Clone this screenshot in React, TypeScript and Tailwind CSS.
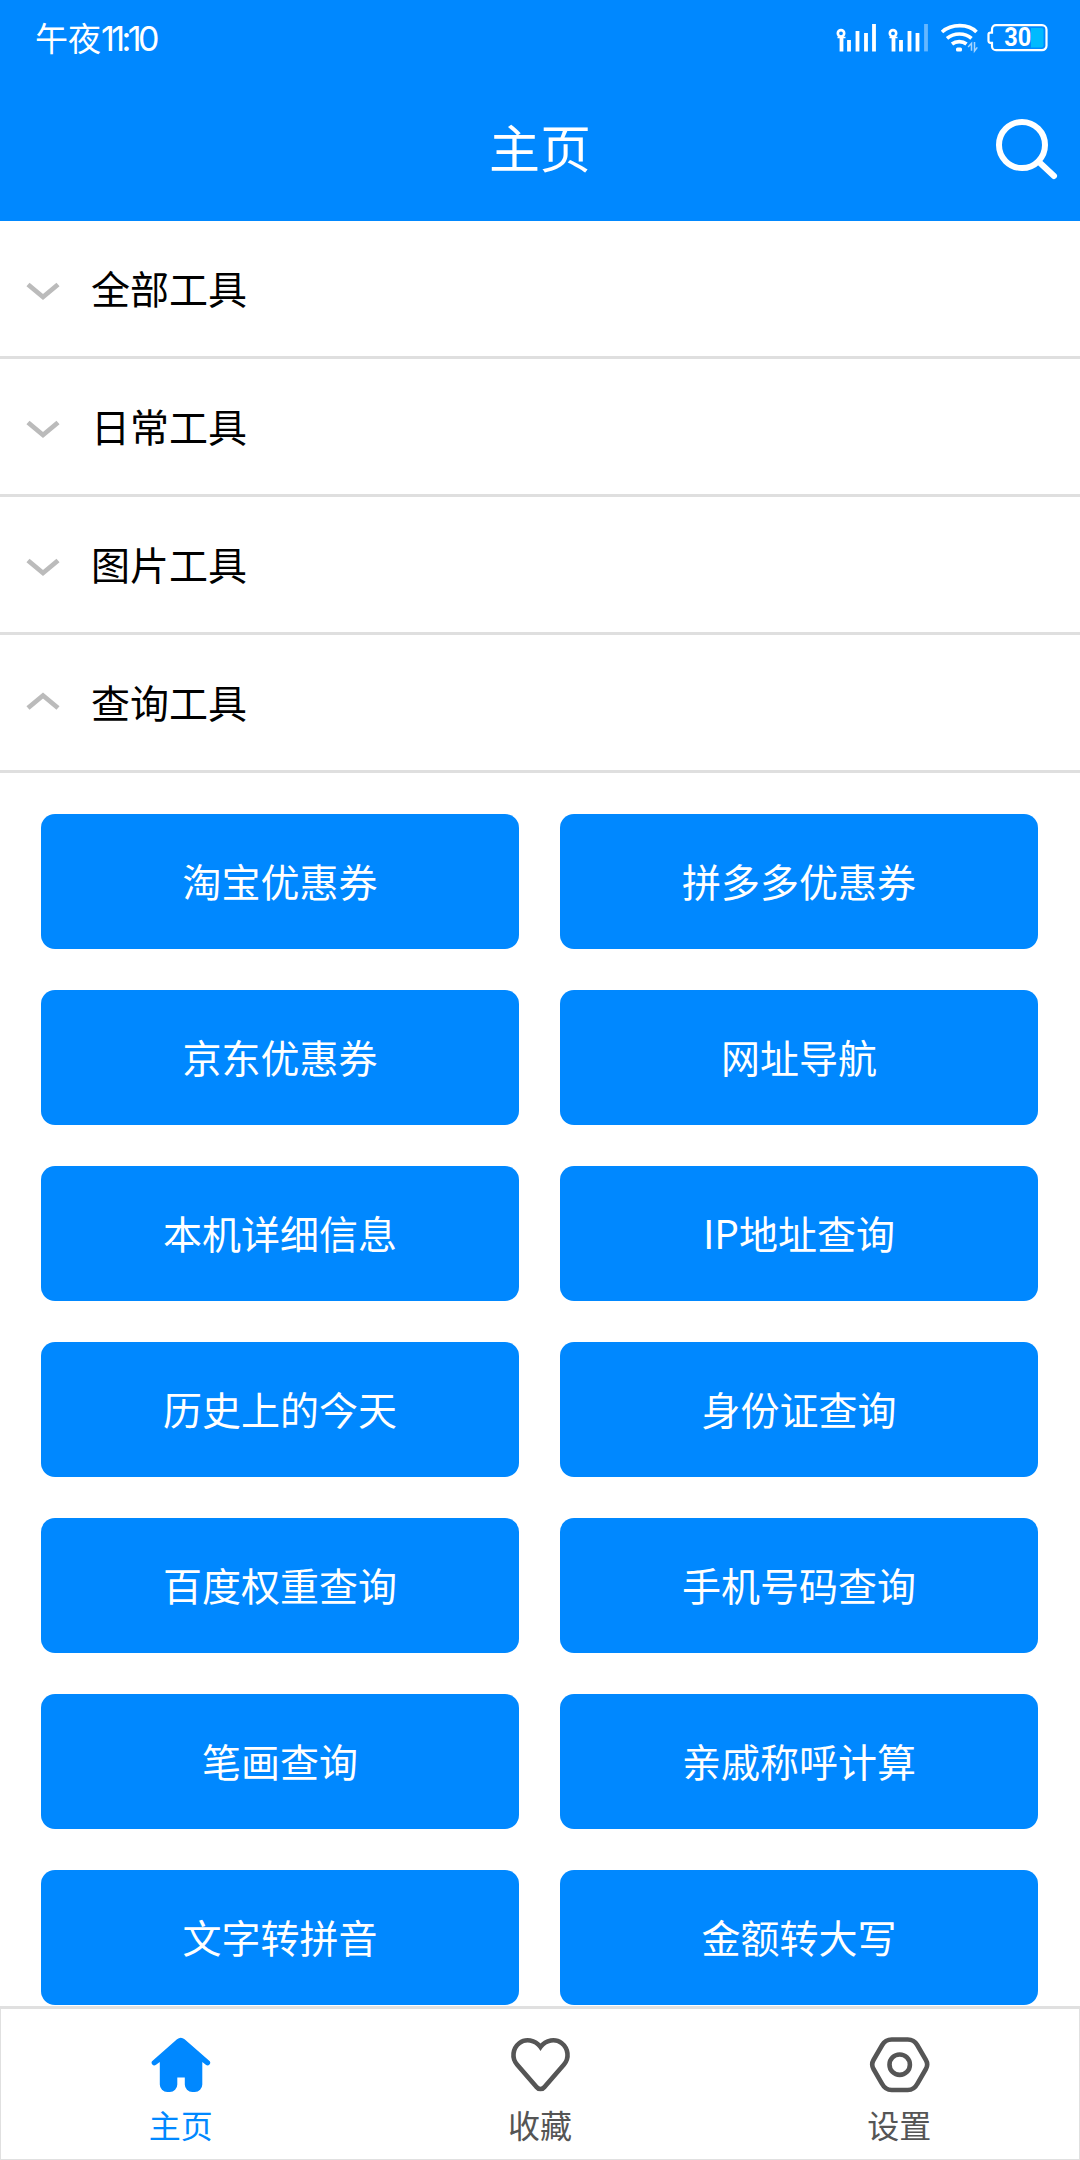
import { useState } from 'react';

interface Category {
    name: string;
    tools: string[];
}

const categories: Category[] = [
    { name: '全部工具', tools: [] },
    { name: '日常工具', tools: [] },
    { name: '图片工具', tools: [] },
    {
        name: '查询工具',
        tools: [
            '淘宝优惠券',
            '拼多多优惠券',
            '京东优惠券',
            '网址导航',
            '本机详细信息',
            'IP地址查询',
            '历史上的今天',
            '身份证查询',
            '百度权重查询',
            '手机号码查询',
            '笔画查询',
            '亲戚称呼计算',
            '文字转拼音',
            '金额转大写',
        ],
    },
];

function StatusIcons() {
    return (
        <svg width="220" height="36" viewBox="0 0 220 36" fill="none" className="text-white">
            {/* SIM 1 */}
            <g stroke="currentColor" strokeWidth="3.8">
                <circle cx="7" cy="13.3" r="3.2" strokeWidth="2.6" />
                <path d="M7.5 16v15.4M15 20v11.4M23.5 11v20.4M32 13v18.4M40 4v27.4" />
                <path d="M3.5 17.5h8" strokeWidth="1.5" />
            </g>
            {/* SIM 2 */}
            <g stroke="currentColor" strokeWidth="3.8">
                <circle cx="59" cy="13.3" r="3.2" strokeWidth="2.6" />
                <path d="M59.5 16v15.4M67 20v11.4M75.5 11v20.4M83.5 13v18.4" />
                <path d="M55.5 17.5h8" strokeWidth="1.5" />
                <path d="M92 4v27.4" opacity="0.4" />
            </g>
            {/* Wifi */}
            <g stroke="currentColor" strokeWidth="3.6">
                <path d="M108 12C117.5 3.5 134.5 3.5 142.5 12" />
                <path d="M113 18.3C120 12.5 131 12.5 137.5 18.3" />
                <path d="M118 24C122 20.8 128.5 20.8 132.5 24" />
            </g>
            <rect x="122" y="27.5" width="6" height="4" rx="1.5" fill="currentColor" />
            <path
                d="M137.5 30.8v-7.5l-3.4 3.6M140.5 22v9l2.8-3.6"
                stroke="currentColor"
                strokeWidth="1.5"
                opacity="0.65"
            />
            {/* Battery */}
            <path
                d="M162 5.2h46a4.5 4.5 0 0 1 4.5 4.5v16a4.5 4.5 0 0 1-4.5 4.5h-46a4 4 0 0 1-4-4v-3.4h-1.5a2 2 0 0 1-2-2v-6.2a2 2 0 0 1 2-2H158V9.2a4 4 0 0 1 4-4Z"
                stroke="currentColor"
                strokeWidth="2.2"
            />
            <path d="M197 8h10.5a2 2 0 0 1 2 2v15.5a2 2 0 0 1-2 2H197Z" fill="#00baff" />
            <text
                x="183.7"
                y="26.2"
                textAnchor="middle"
                fill="currentColor"
                fontFamily="Roboto, sans-serif"
                fontWeight="700"
                fontSize="25"
                textLength="27"
                lengthAdjust="spacingAndGlyphs"
            >
                30
            </text>
        </svg>
    );
}

function SearchIcon() {
    return (
        <svg
            width="64"
            height="64"
            viewBox="0 0 64 64"
            fill="none"
            stroke="white"
            strokeWidth="6"
            className="overflow-visible"
        >
            <circle cx="28" cy="31" r="23" />
            <path d="M44.5 47.5 60 62" strokeLinecap="round" />
        </svg>
    );
}

function Chevron({ open }: { open: boolean }) {
    return (
        <svg
            width="34"
            height="20"
            viewBox="0 0 34 20"
            fill="none"
            stroke="#bbbbbb"
            strokeWidth="4.8"
            className={open ? '-translate-y-[2px]' : 'translate-y-[2px]'}
        >
            <path d={open ? 'M2 17 17 4.5 32 17' : 'M2 3.5 17 16 32 3.5'} />
        </svg>
    );
}

function HomeIcon() {
    return (
        <svg width="64" height="60" viewBox="0 0 64 60" fill="currentColor">
            <path d="M28 4.2a6 6 0 0 1 7.6 0L60.2 25.8a2.6 2.6 0 0 1-3.4 4L53.3 27v22.5a7.5 7.5 0 0 1-7.5 7.5h-2.5a7.5 7.5 0 0 1-7.5-7.5V42.5h-7.5v7a7.5 7.5 0 0 1-7.5 7.5h-2.5a7.5 7.5 0 0 1-7.5-7.5V27l-3.8 2.8a2.6 2.6 0 0 1-3.4-4Z" />
        </svg>
    );
}

function HeartIcon() {
    return (
        <svg width="64" height="60" viewBox="0 0 64 60" fill="none" stroke="currentColor" strokeWidth="4.6">
            <path d="M32.5 12C27 4.5 17.5 3.3 11.5 8C4.5 13.5 3.5 23 9 29.5L28.5 52a5 5 0 0 0 8 0L56 29.5C61.5 23 60.5 13.5 53.5 8C47.5 3.3 38 4.5 32.5 12Z" />
        </svg>
    );
}

function SettingsIcon() {
    return (
        <svg width="64" height="60" viewBox="-0.7 0.5 64 60" fill="none" stroke="currentColor" strokeWidth="4.6">
            <path d="M24 5h16a11 11 0 0 1 9.5 5.5l8.7 15a9 9 0 0 1 0 9l-8.7 15A11 11 0 0 1 40 55.500H24a11 11 0 0 1-9.5-6l-8.7-15a9 9 0 0 1 0-9l8.7-15A11 11 0 0 1 24 5Z" />
            <circle cx="32" cy="30.2" r="10.2" />
        </svg>
    );
}

const tabs = [
    { label: '主页', Icon: HomeIcon },
    { label: '收藏', Icon: HeartIcon },
    { label: '设置', Icon: SettingsIcon },
];

export default function App() {
    const [openIndex, setOpenIndex] = useState<number | null>(3);
    const [activeTab, setActiveTab] = useState(0);

    return (
        <div className="flex h-[2160px] w-[1080px] flex-col overflow-hidden bg-white font-['Noto_Sans_CJK_SC',sans-serif]">
            <header className="h-[221px] shrink-0 bg-[#0088ff] text-white">
                <div className="flex h-[76px] items-center justify-between pr-[26px] pl-[35px]">
                    <div className="flex items-center text-[33px] leading-none">
                        <span className="pb-[2px]">午夜</span>
                        <span className="pt-[2px] font-['Inter',sans-serif] text-[34px] tracking-[-3.6px]">11:10</span>
                    </div>
                    <StatusIcons />
                </div>
                <div className="grid h-[145px] grid-cols-[1fr_auto_1fr] items-start">
                    <h1 className="col-start-2 pt-[45px] text-[51px] leading-[51px]">主页</h1>
                    <button className="justify-self-end pt-[38px] pr-[22px]">
                        <SearchIcon />
                    </button>
                </div>
            </header>

            <main className="min-h-0 flex-1 overflow-hidden">
                {categories.map((category, index) => (
                    <section key={category.name}>
                        <button
                            className="flex h-[138px] w-full items-center border-b-[3px] border-[#dfdfdf] pl-[26px] text-[39px] leading-none text-black"
                            onClick={() => setOpenIndex(openIndex === index ? null : index)}
                        >
                            <Chevron open={openIndex === index} />
                            <span className="ml-[31px] pb-[3px]">{category.name}</span>
                        </button>
                        {openIndex === index && (
                            <div className="grid grid-cols-2 gap-[41px] pt-[41px] pr-[42px] pl-[41px]">
                                {category.tools.map((tool) => (
                                    <button
                                        key={tool}
                                        className="h-[135px] rounded-[14px] bg-[#0088ff] pb-[2px] text-[39px] leading-none text-white"
                                    >
                                        {tool}
                                    </button>
                                ))}
                            </div>
                        )}
                    </section>
                ))}
            </main>

            <nav className="grid h-[154px] shrink-0 grid-cols-3 border border-t-[3px] border-[#e0e0e0] bg-white">
                {tabs.map(({ label, Icon }, index) => (
                    <button
                        key={label}
                        className={`flex flex-col items-center pt-[26px] ${
                            activeTab === index ? 'text-[#0088ff]' : 'text-[#555555]'
                        }`}
                        onClick={() => setActiveTab(index)}
                    >
                        <Icon />
                        <span className="mt-[13px] text-[32px] leading-[32px]">{label}</span>
                    </button>
                ))}
            </nav>
        </div>
    );
}
